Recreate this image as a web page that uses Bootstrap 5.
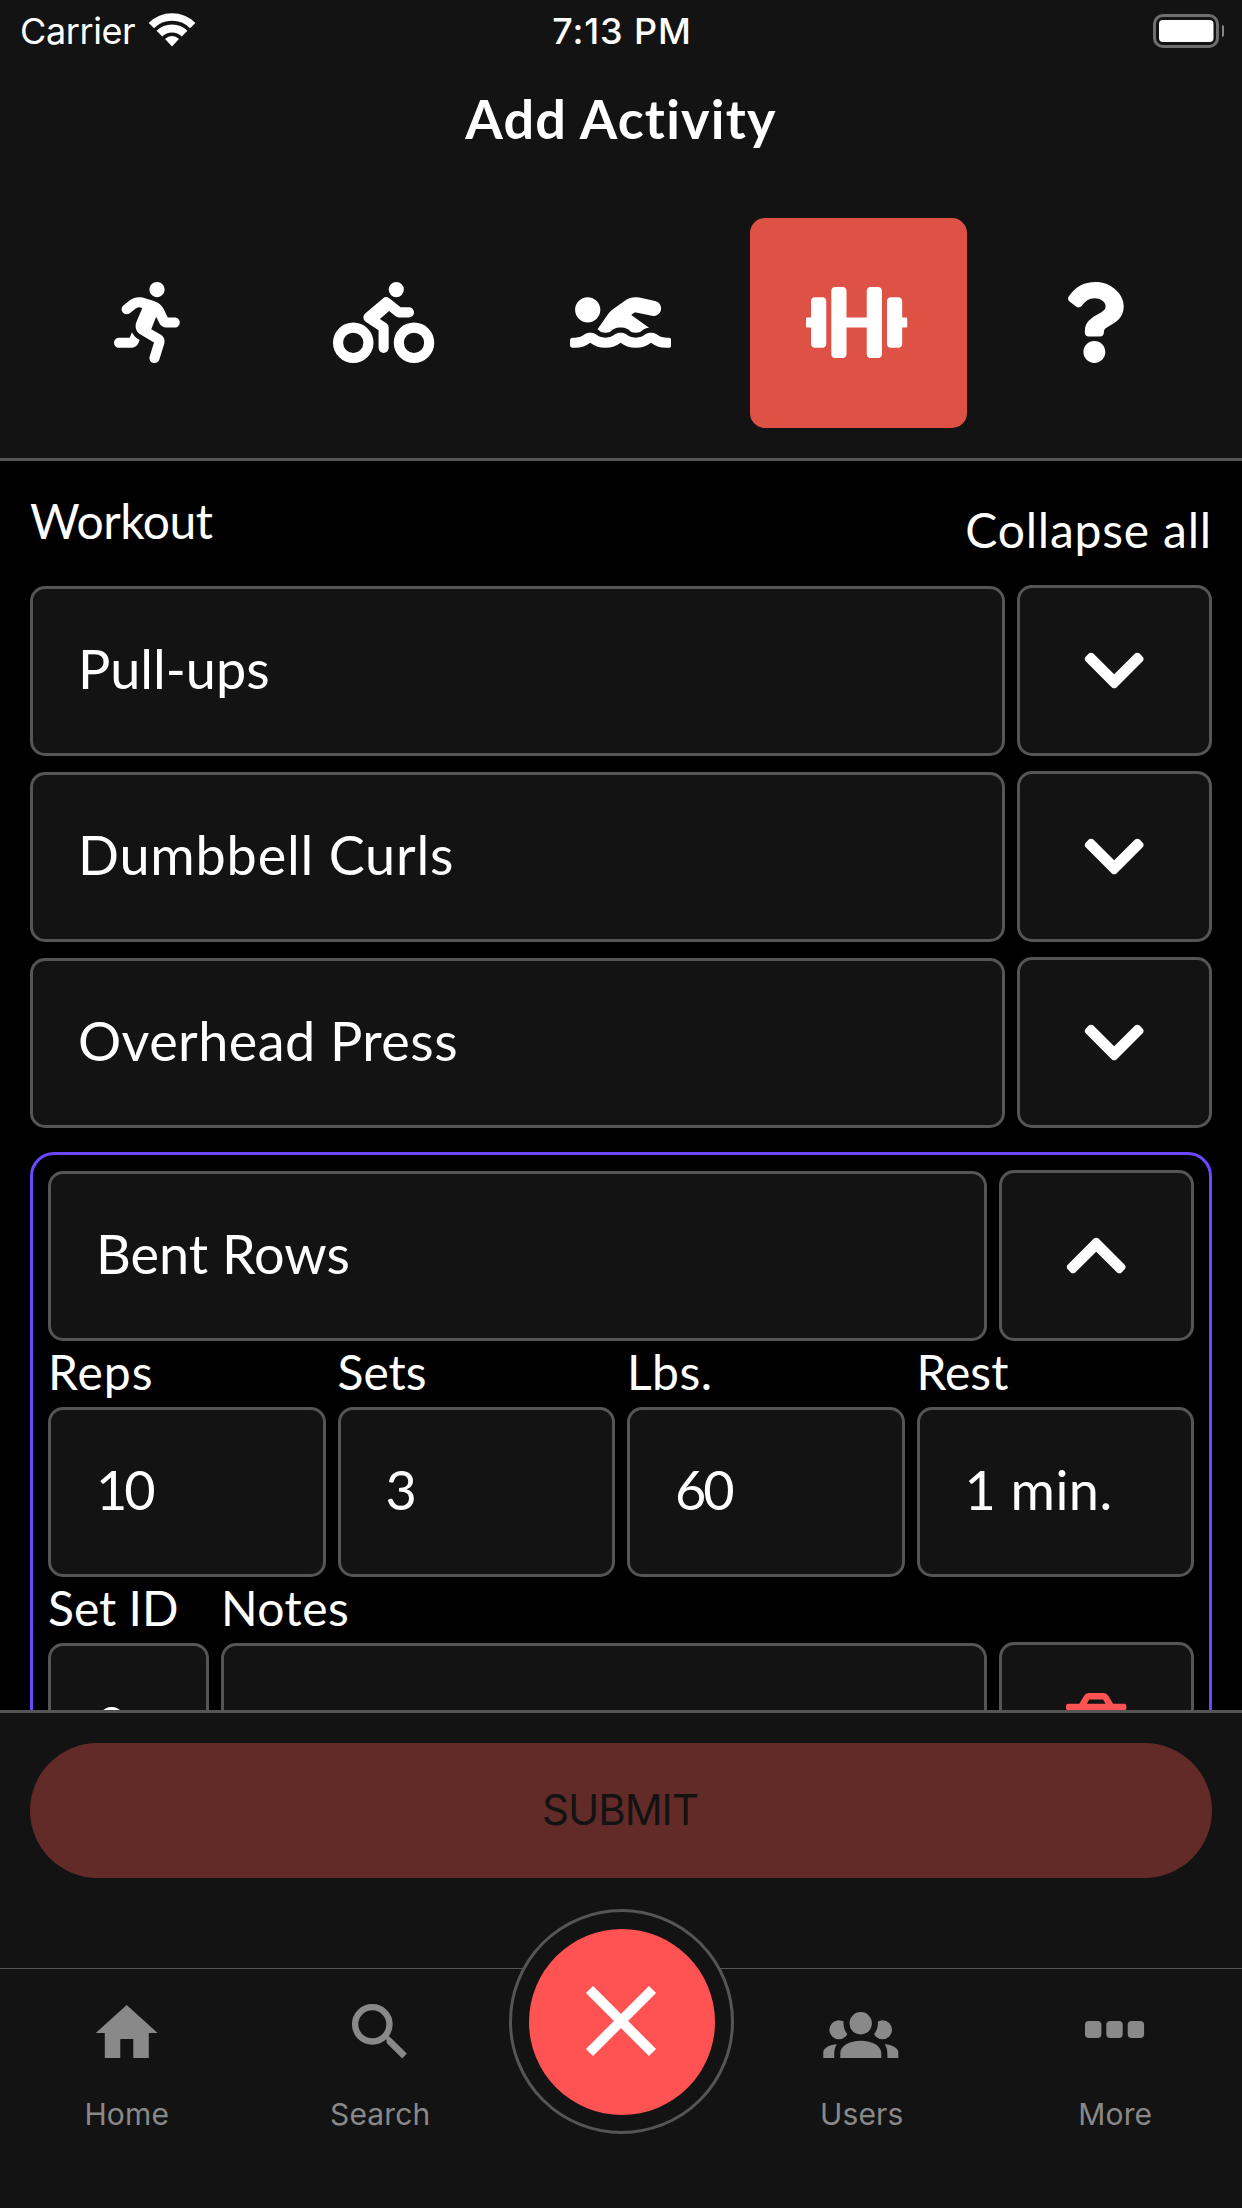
<!DOCTYPE html>
<html lang="en" data-bs-theme="dark">
<head>
<meta charset="utf-8">
<meta name="viewport" content="width=device-width, initial-scale=1">
<title>Add Activity</title>
<link href="https://cdn.jsdelivr.net/npm/bootstrap@5.3.0/dist/css/bootstrap.min.css" rel="stylesheet">
<style>
  :root { --panel: #131313; --line: #555; --accent: #ff5252; --muted: #898989; }
  body { background: #000; color: #fff; font-family: Lato, "Open Sans", sans-serif; }
  .screen { width: 1242px; height: 2208px; }
  .panel { background: var(--panel); }

  .status-bar { height: 60px; padding: 3px 18px 0 20px; font: 400 36px/1.2 Inter, sans-serif; }
  .status-bar > * { flex: 1 1 0; }
  .carrier { letter-spacing: -.4px; }
  .wifi { margin: 0 0 3px 11px; }
  .clock { font-weight: 500; letter-spacing: .9px; }

  .top-panel { height: 461px; border-bottom: 3px solid var(--line); }
  .page-title { font-size: 54px; line-height: 66px; font-weight: 700; letter-spacing: 1.2px; margin: 26px 0 66px; }
  .type-row { padding: 0 30px; }
  .type-tile { height: 210px; margin: 0 10px; border-radius: 15px; padding: 0 2px 2px 0; flex: 1 1 0; }
  .type-tile:last-child { padding-right: 0; }
  .type-tile.chosen { background: #de5145; padding-right: 3px; }
  .type-tile svg { height: 81px; fill: #fff; }

  .list-area { flex: 1 1 0; padding: 0 30px; }
  .list-head { height: 124px; padding-top: 29px; }
  .collapse-link { padding-top: 9px; }
  .caption { font-size: 48px; line-height: 62px; height: 66px; white-space: nowrap; }
  .field { height: 170px; margin-top: 1px; border: 3px solid var(--line); border-radius: 15px; background: var(--panel);
           padding: 0 45px 5px; font-size: 54px; white-space: nowrap; }
  .captioned .field { margin-top: 0; padding-bottom: 6px; }
  .square-btn { width: 195px; height: 171px; border: 3px solid var(--line); border-radius: 15px; background: var(--panel); flex: none; }
  .square-btn svg { height: 69px; fill: #fff; }
  .square-btn.danger svg { fill: var(--accent); }
  .gap-12 { gap: 12px; }
  .gap-15 { gap: 15px; }
  .open-card { margin-top: 24px; padding: 15px; border: 3px solid #6c47ff; border-radius: 24px; height: 700px; }
  .set-id { width: 161px; }

  .submit-panel { height: 258px; border-top: 3px solid var(--line); padding: 30px 30px 0; }
  .submit-btn { height: 135px; padding: 0 2px 1px 0; background: #622b27; color: #131313; font: 400 42px/1.2 Inter, sans-serif; letter-spacing: -1px; }

  .tab-bar { height: 240px; border-top: 1px solid var(--line); font: 400 30px/40px Inter, sans-serif; color: var(--muted); }
  .tab { padding-top: 30px; letter-spacing: .15px; flex: 1 1 0; }
  .tab svg { width: 80px; height: 64px; margin-bottom: 31px; fill: currentColor; }
  .tab-middle { width: 228px; flex: none; }
  .ring { width: 225px; height: 225px; margin-top: -60px; padding-left: 1px; border: 3px solid var(--line); position: relative; }
  .close-btn { width: 186px; height: 186px; background: var(--accent); }

  .ls-n30 { letter-spacing: -3px; }
  .ls-n05 { letter-spacing: -.5px; }
  .ls-p05 { letter-spacing: .45px; }
  .ls-p09 { letter-spacing: .8px; }
  .ls-p13 { letter-spacing: 1px; }
</style>
<script src="https://cdn.jsdelivr.net/npm/bootstrap@5.3.0/dist/js/bootstrap.bundle.min.js"></script>
</head>
<body>
<svg class="d-none">
  <symbol id="down" viewBox="0 0 448 512"><path d="M207.029 381.476L12.686 187.132c-9.373-9.373-9.373-24.569 0-33.941l22.667-22.667c9.357-9.357 24.522-9.375 33.901-.04L224 284.505l154.745-154.021c9.379-9.335 24.544-9.317 33.901.04l22.667 22.667c9.373 9.373 9.373 24.569 0 33.941L240.971 381.476c-9.373 9.372-24.569 9.372-33.942 0z"/></symbol>
</svg>
<div class="screen d-flex flex-column overflow-hidden">

  <header class="top-panel panel flex-shrink-0">
    <div class="status-bar d-flex align-items-center">
      <div class="d-flex align-items-center">
        <span class="carrier">Carrier</span>
        <svg class="wifi" width="52" height="36" viewBox="146 11.5 52 36"><g fill="none" stroke="#fff"><path stroke-width="7.6" d="M151.400 25.100a29.200 29.200 0 0 1 41.300 0"/><path stroke-width="8" d="M159.400 33.100a17.850 17.850 0 0 1 25.200 0"/></g><path fill="#fff" d="M172 45.900l-7-7.400a9.800 9.800 0 0 1 14 0z"/></svg>
      </div>
      <div class="clock text-center">7:13 PM</div>
      <div class="text-end lh-1">
        <svg class="battery d-block ms-auto" width="72" height="36" viewBox="0 0 72 36"><rect x="2.500" y="1.500" width="63" height="31" rx="8.500" fill="none" stroke="#6f6f6f" stroke-width="3"/><rect x="7" y="6" width="54.500" height="22" rx="4" fill="#fff"/><path fill="#858585" d="M70 10.700c5.300 2.500 5.300 10 0 12.600z"/></svg>
      </div>
    </div>
    <h1 class="page-title text-center">Add Activity</h1>
    <div class="type-row d-flex">
      <div class="type-tile d-flex align-items-center justify-content-center">
        <svg viewBox="0 0 416 512"><path d="M272 96c26.51 0 48-21.49 48-48S298.51 0 272 0s-48 21.49-48 48 21.49 48 48 48zM113.69 317.47l-14.8 34.52H32c-17.67 0-32 14.33-32 32s14.33 32 32 32h77.45c19.25 0 36.58-11.44 44.11-29.09l8.79-20.52-10.67-6.3c-17.32-10.23-30.06-25.37-37.99-42.62zM384 223.99h-44.03l-26.06-53.25c-12.5-25.55-35.45-44.23-61.78-50.94l-71.08-21.14c-28.3-6.8-57.77-.55-80.84 17.14l-39.67 30.41c-14.03 10.75-16.69 30.83-5.94 44.86s30.84 16.69 44.86 5.94l39.69-30.41c7.67-5.89 17.44-8 25.27-6.14l14.7 4.37-37.46 87.39c-12.62 29.48-1.31 64.01 26.3 80.31l84.98 50.17-27.47 87.73c-5.28 16.86 4.11 34.82 20.97 40.09 3.19 1 6.41 1.48 9.58 1.48 13.61 0 26.23-8.77 30.52-22.45l31.64-101.06c5.91-20.77-2.89-43.08-21.64-54.39l-61.24-36.14 31.31-78.28 20.27 41.43c8 16.34 24.92 26.89 43.11 26.89H384c17.67 0 32-14.33 32-32s-14.33-31.99-32-31.99z"/></svg>
      </div>
      <div class="type-tile d-flex align-items-center justify-content-center">
        <svg viewBox="0 0 640 512"><path d="M400 96a48 48 0 1 0-48-48 48 48 0 0 0 48 48zm-4 121a31.9 31.9 0 0 0 20 7h64a32 32 0 0 0 0-64h-52.78L356 103a31.94 31.94 0 0 0-40.81.68l-112 96a32 32 0 0 0 3.08 50.92L288 305.12V416a32 32 0 0 0 64 0V288a32 32 0 0 0-14.25-26.62l-41.36-27.57 58.25-49.92zm116 39a128 128 0 1 0 128 128 128 128 0 0 0-128-128zm0 192a64 64 0 1 1 64-64 64 64 0 0 1-64 64zM128 256a128 128 0 1 0 128 128 128 128 0 0 0-128-128zm0 192a64 64 0 1 1 64-64 64 64 0 0 1-64 64z"/></svg>
      </div>
      <div class="type-tile d-flex align-items-center justify-content-center">
        <svg viewBox="0 0 640 512"><path d="M189.61 310.58c3.54 3.26 15.27 9.42 34.39 9.42s30.86-6.16 34.39-9.42c16.02-14.77 34.5-22.58 53.46-22.58h16.3c18.96 0 37.45 7.81 53.46 22.58 3.54 3.26 15.27 9.42 34.39 9.42s30.86-6.16 34.39-9.42c14.86-13.71 31.88-21.12 49.39-22.16l-112.84-80.6 18-12.86c3.64-2.58 8.28-3.52 12.62-2.61l100.35 21.53c25.91 5.53 51.44-10.97 57-36.88 5.55-25.92-10.95-51.44-36.88-57L437.68 98.47c-30.73-6.58-63.02.12-88.56 18.38l-80.02 57.17c-10.38 7.39-19.36 16.44-26.72 26.94L173.75 299c5.47 3.23 10.82 6.93 15.86 11.58zM624 352h-16c-26.04 0-45.8-8.42-56.09-17.9-8.9-8.21-19.66-14.1-31.77-14.1h-16.3c-12.11 0-22.87 5.89-31.77 14.1C461.8 343.58 442.04 352 416 352s-45.8-8.42-56.09-17.9c-8.9-8.21-19.66-14.1-31.77-14.1h-16.3c-12.11 0-22.87 5.89-31.77 14.1C269.8 343.58 250.04 352 224 352s-45.8-8.42-56.09-17.9c-8.9-8.21-19.66-14.1-31.77-14.1h-16.3c-12.11 0-22.87 5.89-31.77 14.1C77.8 343.58 58.04 352 32 352H16c-8.84 0-16 7.16-16 16v32c0 8.84 7.16 16 16 16h16c38.62 0 72.72-12.19 96-31.84 23.28 19.66 57.38 31.84 96 31.84s72.72-12.19 96-31.84c23.28 19.66 57.38 31.84 96 31.84s72.72-12.19 96-31.84c23.28 19.66 57.38 31.84 96 31.84h16c8.84 0 16-7.16 16-16v-32c0-8.84-7.16-16-16-16zm-512-96c44.18 0 80-35.82 80-80s-35.82-80-80-80-80 35.82-80 80 35.82 80 80 80z"/></svg>
      </div>
      <div class="type-tile chosen d-flex align-items-center justify-content-center">
        <svg viewBox="0 0 640 512"><path d="M104 96H56c-13.3 0-24 10.7-24 24v104H8c-4.4 0-8 3.6-8 8v48c0 4.4 3.6 8 8 8h24v104c0 13.3 10.7 24 24 24h48c13.3 0 24-10.7 24-24V120c0-13.3-10.7-24-24-24zm528 128h-24V120c0-13.3-10.7-24-24-24h-48c-13.3 0-24 10.7-24 24v272c0 13.3 10.7 24 24 24h48c13.3 0 24-10.7 24-24V288h24c4.4 0 8-3.6 8-8v-48c0-4.4-3.6-8-8-8zM456 32h-48c-13.3 0-24 10.7-24 24v168H256V56c0-13.3-10.7-24-24-24h-48c-13.3 0-24 10.7-24 24v400c0 13.3 10.7 24 24 24h48c13.3 0 24-10.7 24-24V288h128v168c0 13.3 10.7 24 24 24h48c13.3 0 24-10.7 24-24V56c0-13.3-10.7-24-24-24z"/></svg>
      </div>
      <div class="type-tile d-flex align-items-center justify-content-center">
        <svg viewBox="0 0 384 512"><path d="M202.021 0C122.202 0 70.503 32.703 29.914 91.026c-7.363 10.58-5.093 25.086 5.178 32.874l43.138 32.709c10.373 7.865 25.132 6.026 33.253-4.148 25.049-31.381 43.63-49.449 82.757-49.449 30.764 0 68.816 19.799 68.816 49.631 0 22.552-18.617 34.134-48.993 51.164-35.423 19.86-82.299 44.576-82.299 106.405V320c0 13.255 10.745 24 24 24h72.471c13.255 0 24-10.745 24-24v-5.773c0-42.86 125.268-44.645 125.268-160.627C377.504 66.256 286.902 0 202.021 0zM192 373.459c-38.196 0-69.271 31.075-69.271 69.271 0 38.195 31.075 69.27 69.271 69.27s69.271-31.075 69.271-69.271-31.075-69.27-69.271-69.27z"/></svg>
      </div>
    </div>
  </header>

  <main class="list-area overflow-hidden">
    <div class="list-head d-flex justify-content-between align-items-start">
      <div class="caption ls-n05">Workout</div>
      <div class="caption collapse-link ls-p09">Collapse all</div>
    </div>
    <div class="d-flex flex-column gap-15">
      <div class="d-flex gap-12">
        <div class="field flex-grow-1 d-flex align-items-center">Pull-ups</div>
        <div class="square-btn d-flex align-items-center justify-content-center"><svg viewBox="0 0 448 512"><use href="#down"/></svg></div>
      </div>
      <div class="d-flex gap-12">
        <div class="field flex-grow-1 d-flex align-items-center ls-p09">Dumbbell Curls</div>
        <div class="square-btn d-flex align-items-center justify-content-center"><svg viewBox="0 0 448 512"><use href="#down"/></svg></div>
      </div>
      <div class="d-flex gap-12">
        <div class="field flex-grow-1 d-flex align-items-center ls-p05">Overhead Press</div>
        <div class="square-btn d-flex align-items-center justify-content-center"><svg viewBox="0 0 448 512"><use href="#down"/></svg></div>
      </div>
    </div>

    <section class="open-card">
      <div class="d-flex gap-12">
        <div class="field flex-grow-1 d-flex align-items-center">Bent Rows</div>
        <div class="square-btn d-flex align-items-center justify-content-center"><svg viewBox="0 0 448 512"><path d="M240.971 130.524l194.343 194.343c9.373 9.373 9.373 24.569 0 33.941l-22.667 22.667c-9.357 9.357-24.522 9.375-33.901.04L224 227.495 69.255 381.516c-9.379 9.335-24.544 9.317-33.901-.04l-22.667-22.667c-9.373-9.373-9.373-24.569 0-33.941L207.030 130.525c9.372-9.373 24.568-9.373 33.941-.001z"/></svg></div>
      </div>
      <div class="d-flex gap-12 captioned">
        <div class="w-25"><div class="caption ls-p13">Reps</div><div class="field d-flex align-items-center ls-n30">10</div></div>
        <div class="w-25"><div class="caption">Sets</div><div class="field d-flex align-items-center">3</div></div>
        <div class="w-25"><div class="caption ls-p05">Lbs.</div><div class="field d-flex align-items-center ls-n30">60</div></div>
        <div class="w-25"><div class="caption">Rest</div><div class="field d-flex align-items-center ls-p05">1 min.</div></div>
      </div>
      <div class="d-flex gap-12 align-items-end captioned">
        <div class="set-id"><div class="caption">Set ID</div><div class="field d-flex align-items-center">0</div></div>
        <div class="flex-grow-1"><div class="caption ls-p05">Notes</div><div class="field"></div></div>
        <div class="square-btn danger d-flex align-items-center justify-content-center"><svg viewBox="0 0 448 512"><path d="M268 416h24a12 12 0 0 0 12-12V188a12 12 0 0 0-12-12h-24a12 12 0 0 0-12 12v216a12 12 0 0 0 12 12zM432 80h-82.410l-34-56.700A48 48 0 0 0 274.410 0H173.590a48 48 0 0 0-41.160 23.300L98.410 80H16A16 16 0 0 0 0 96v16a16 16 0 0 0 16 16h16v336a48 48 0 0 0 48 48h288a48 48 0 0 0 48-48V128h16a16 16 0 0 0 16-16V96a16 16 0 0 0-16-16zM171.840 50.910A6 6 0 0 1 177 48h94a6 6 0 0 1 5.150 2.910L293.610 80H154.390zM368 464H80V128h288zm-212-48h24a12 12 0 0 0 12-12V188a12 12 0 0 0-12-12h-24a12 12 0 0 0-12 12v216a12 12 0 0 0 12 12z"/></svg></div>
      </div>
    </section>
  </main>

  <div class="submit-panel panel flex-shrink-0">
    <div class="submit-btn rounded-pill d-flex align-items-center justify-content-center">SUBMIT</div>
  </div>

  <nav class="tab-bar panel d-flex flex-shrink-0">
    <div class="tab d-flex flex-column align-items-center">
      <svg viewBox="0 0 80 64"><path d="M39.700 6L8.700 34h9.100v25h15.500V40h13v19h15.500V34h8.800z"/></svg>Home
    </div>
    <div class="tab d-flex flex-column align-items-center">
      <svg viewBox="0 0 80 64"><circle cx="32.300" cy="25.300" r="17.200" fill="none" stroke="currentColor" stroke-width="6.400"/><path d="M44 38.500l3-2.500 4.300 3.300L66.800 54.500l-4.500 5L46.600 44v-3.300z"/></svg>Search
    </div>
    <div class="tab-middle d-flex justify-content-center align-items-start">
      <div class="ring panel rounded-circle d-flex align-items-center justify-content-center">
        <div class="close-btn rounded-circle"><svg class="d-block" width="186" height="186" viewBox="0 0 186 186"><path stroke="#fff" stroke-width="10" d="M60.500 60.500l63 63M123.500 60.500l-63 63"/></svg></div>
      </div>
    </div>
    <div class="tab d-flex flex-column align-items-center">
      <svg viewBox="0 0 80 64"><circle cx="16.900" cy="30.700" r="9.500"/><circle cx="60.500" cy="30.700" r="9.500"/><circle cx="38.700" cy="24.300" r="17.200" fill="#131313"/><circle cx="38.700" cy="24.300" r="11.200"/><path d="M18.300 59v-5c0-7 9-12.300 20.500-12.300S59.300 47 59.300 54v5zM1.300 59v-6c0-4 6.700-7.200 13.600-7.700-2.100 2.700-2.700 6.700-2.700 9.700v4zM76.300 59v-6c0-4-6.700-7.200-13.600-7.700 2.100 2.700 2.700 6.700 2.700 9.700v4z"/></svg>Users
    </div>
    <div class="tab d-flex flex-column align-items-center">
      <svg viewBox="0 0 80 64"><rect x="10" y="22" width="16.400" height="17" rx="4"/><rect x="31.300" y="22" width="16.400" height="17" rx="4"/><rect x="52.700" y="22" width="16.400" height="17" rx="4"/></svg>More
    </div>
  </nav>
</div>
</body>
</html>
